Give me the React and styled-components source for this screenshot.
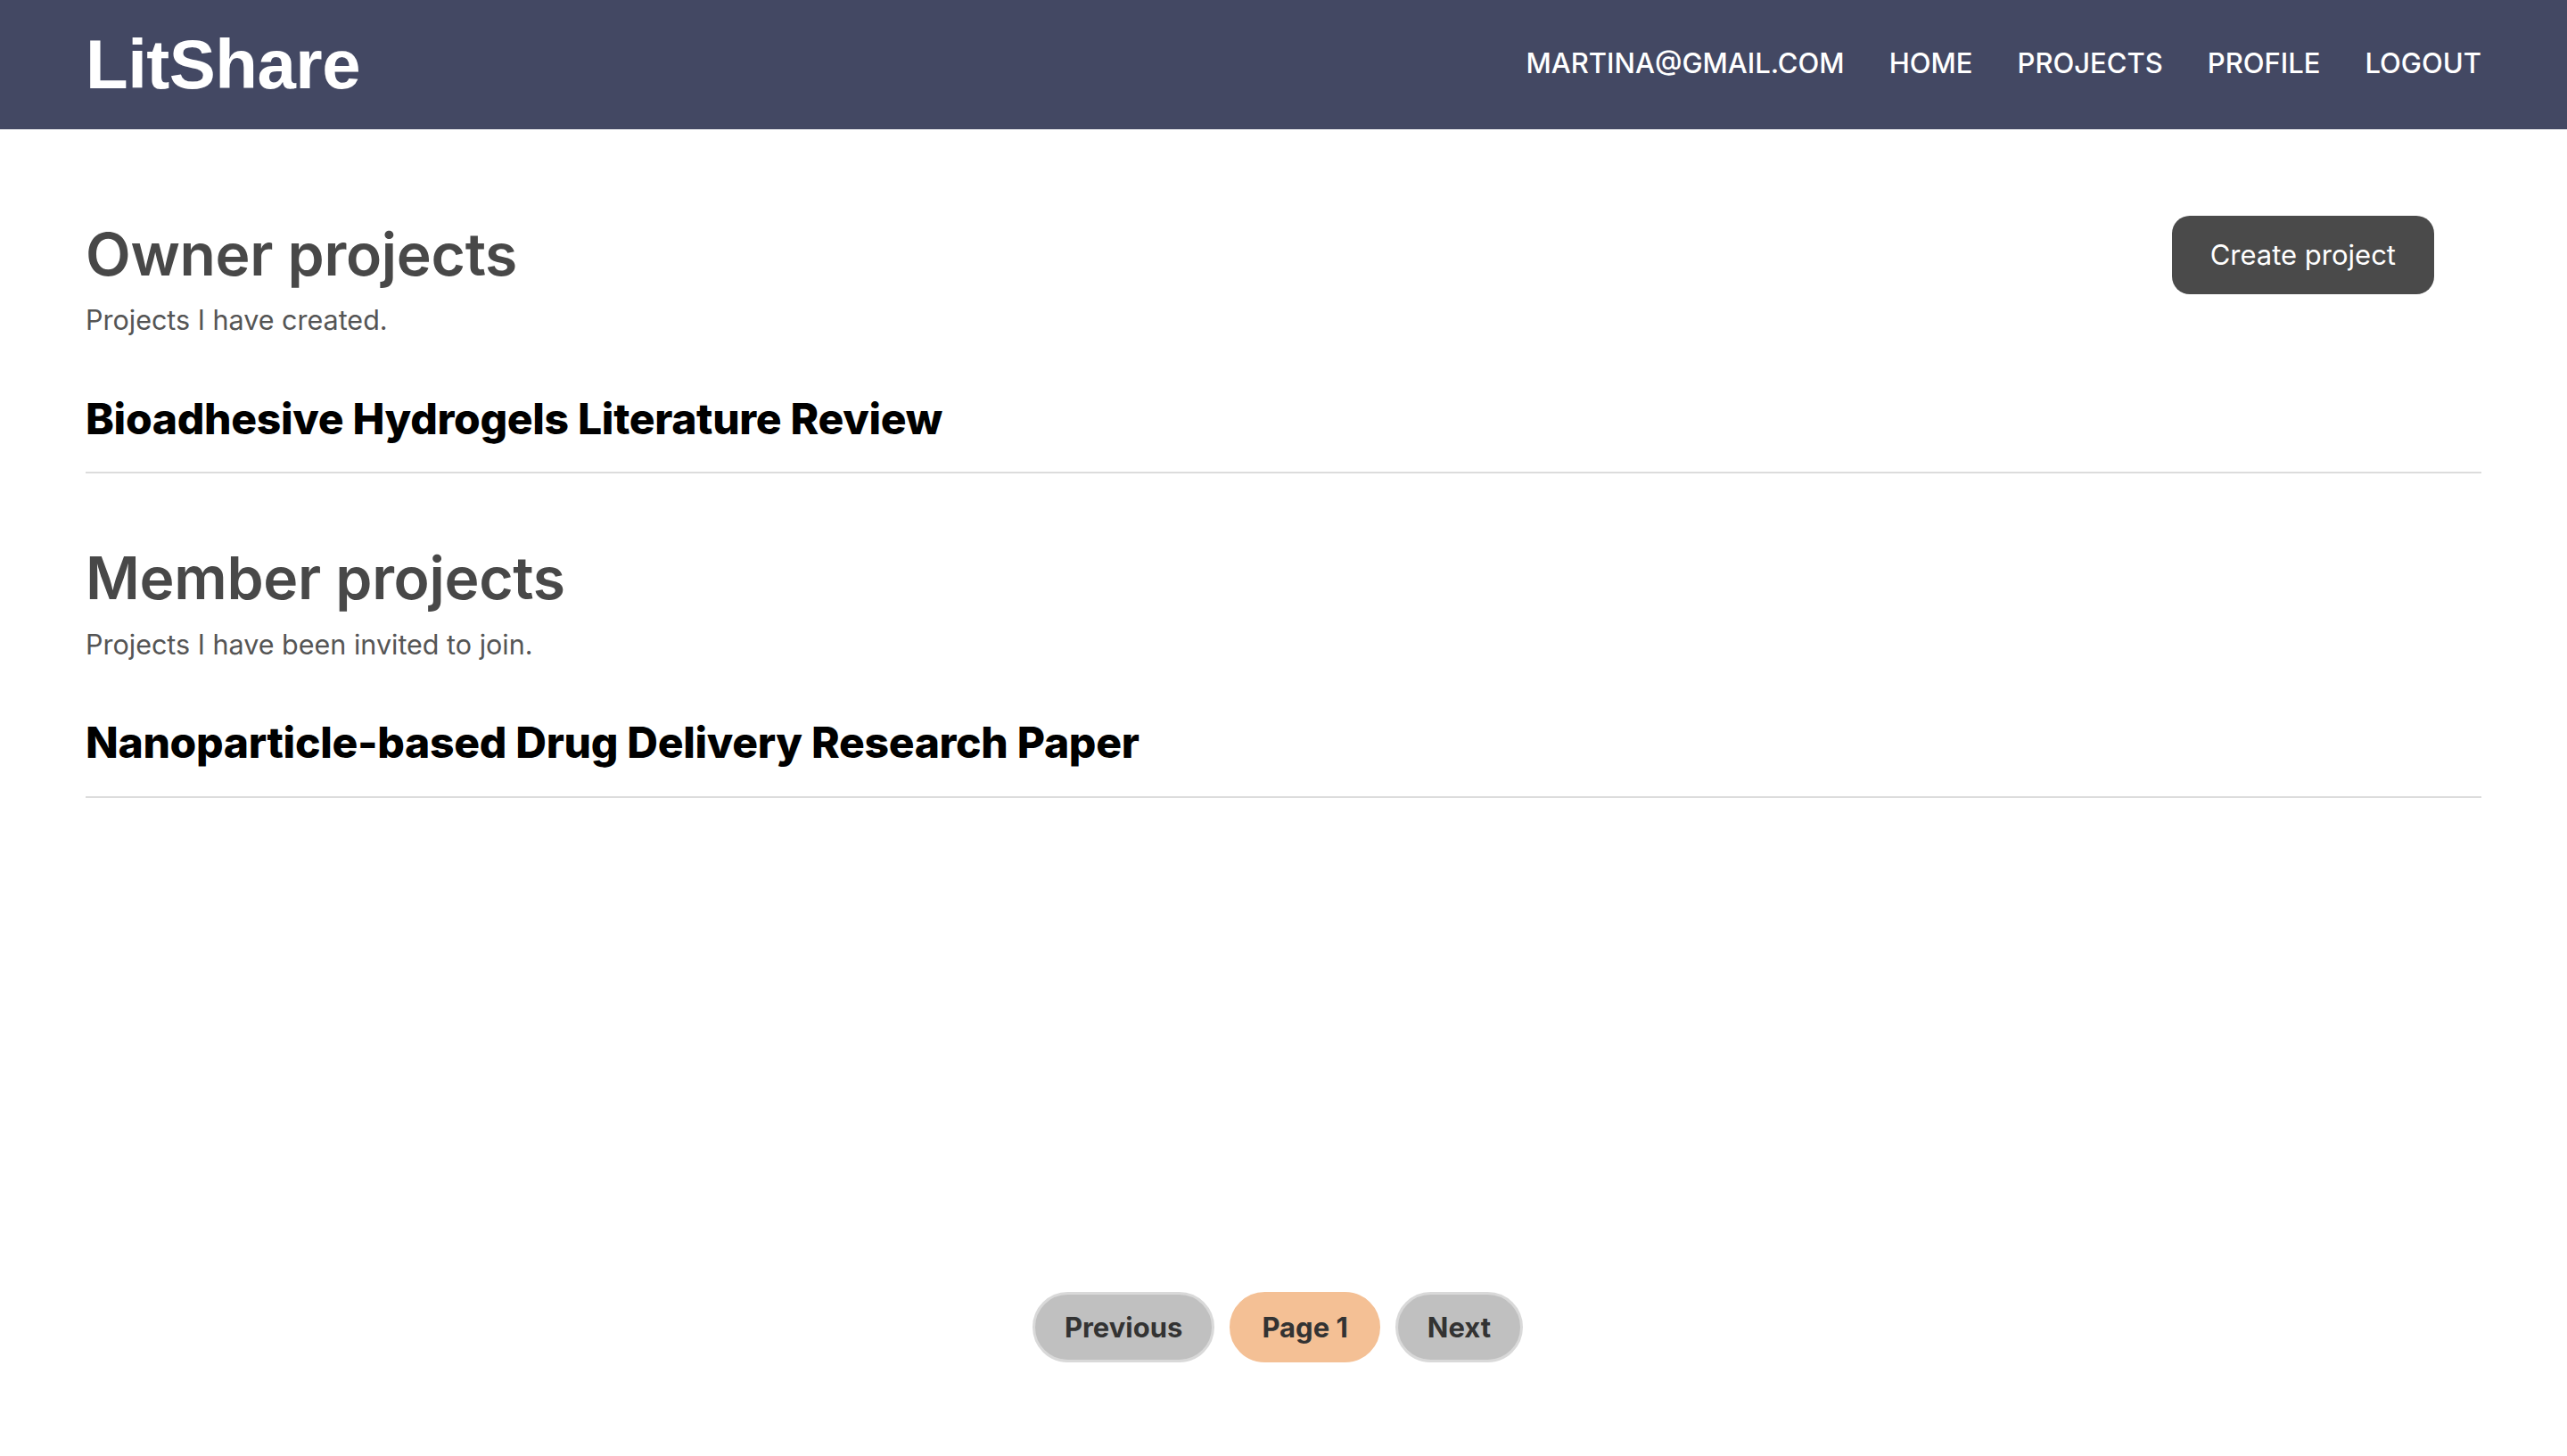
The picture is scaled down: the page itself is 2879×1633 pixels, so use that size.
import React from 'react';
import styled, { createGlobalStyle } from 'styled-components';

const GlobalStyle = createGlobalStyle`
    html, body {
        margin: 0;
        padding: 0;
        background: #fff;
    }
    body {
        font-family: Inter, "Noto Sans", sans-serif;
    }
`;

const Page = styled.div`
    display: flex;
    flex-direction: column;
    min-height: 100vh;
`;

const NavBar = styled.header`
    height: 145px;
    background-color: #434863;
    display: flex;
    align-items: center;
    justify-content: space-between;
    padding: 0 96px;
    box-sizing: border-box;
`;

const Logo = styled.div`
    font-family: "Liberation Sans", Arial, sans-serif;
    font-weight: 700;
    font-size: 78px;
    color: #fff;
    letter-spacing: -0.5px;
`;

const NavLinks = styled.nav`
    display: flex;
    gap: 50px;
    margin-bottom: 4px;
`;

const NavLink = styled.a`
    font-size: 31px;
    font-weight: 500;
    color: #fff;
    text-transform: uppercase;
    text-decoration: none;
`;

const Main = styled.main`
    padding: 101px 96px 0;
    display: flex;
    flex-direction: column;
    gap: 78px;
`;

const Section = styled.section`
    display: flex;
    flex-direction: column;
`;

const SectionTop = styled.div`
    display: flex;
    align-items: center;
    justify-content: space-between;
`;

const Heading = styled.h2`
    margin: 0;
    font-size: 66px;
    line-height: 1.2;
    font-weight: 600;
    color: #484848;
    letter-spacing: -0.3px;
`;

const Subtitle = styled.p`
    margin: 16px 0 0;
    font-size: 30.5px;
    line-height: 1.2;
    color: #555;
`;

const CreateButton = styled.button`
    margin: -5px 53px -5px 0;
    height: 88px;
    padding: 0 43px;
    border: none;
    border-radius: 20px;
    background-color: #4a4a4a;
    color: #fff;
    font-family: Inter, sans-serif;
    font-size: 31px;
    font-weight: 400;
    cursor: pointer;
`;

const ProjectItem = styled.div`
    margin-top: 63px;
    padding-bottom: 31px;
    border-bottom: 2px solid #dcdcdc;
    font-size: 48px;
    line-height: 1.2;
    font-weight: 800;
    color: #000;
    letter-spacing: -0.3px;
`;

const Pagination = styled.div`
    margin-top: auto;
    padding: 0 13px 105px 0;
    display: flex;
    justify-content: center;
    gap: 17px;
`;

const PageButton = styled.button`
    height: 79px;
    padding: 0 33px;
    border-radius: 40px;
    border: 3px solid ${({ current }) => (current ? '#f4c095' : '#d9d9d9')};
    background-color: ${({ current }) => (current ? '#f4c095' : '#c0c0c0')};
    color: #333;
    font-family: Inter, sans-serif;
    font-size: 31px;
    font-weight: 700;
`;

const sections = [
    {
        title: 'Owner projects',
        subtitle: 'Projects I have created.',
        projects: ['Bioadhesive Hydrogels Literature Review'],
        canCreate: true,
    },
    {
        title: 'Member projects',
        subtitle: 'Projects I have been invited to join.',
        projects: ['Nanoparticle-based Drug Delivery Research Paper'],
    },
];

function App() {
    return (
        <Page>
            <GlobalStyle />
            <NavBar>
                <Logo>LitShare</Logo>
                <NavLinks>
                    {['martina@gmail.com', 'Home', 'Projects', 'Profile', 'Logout'].map((link) => (
                        <NavLink key={link} href="#">{link}</NavLink>
                    ))}
                </NavLinks>
            </NavBar>
            <Main>
                {sections.map(({ title, subtitle, projects, canCreate }) => (
                    <Section key={title}>
                        <SectionTop>
                            <Heading>{title}</Heading>
                            {canCreate && <CreateButton>Create project</CreateButton>}
                        </SectionTop>
                        <Subtitle>{subtitle}</Subtitle>
                        {projects.map((name) => (
                            <ProjectItem key={name}>{name}</ProjectItem>
                        ))}
                    </Section>
                ))}
            </Main>
            <Pagination>
                <PageButton>Previous</PageButton>
                <PageButton current>Page 1</PageButton>
                <PageButton>Next</PageButton>
            </Pagination>
        </Page>
    );
}

export default App;
